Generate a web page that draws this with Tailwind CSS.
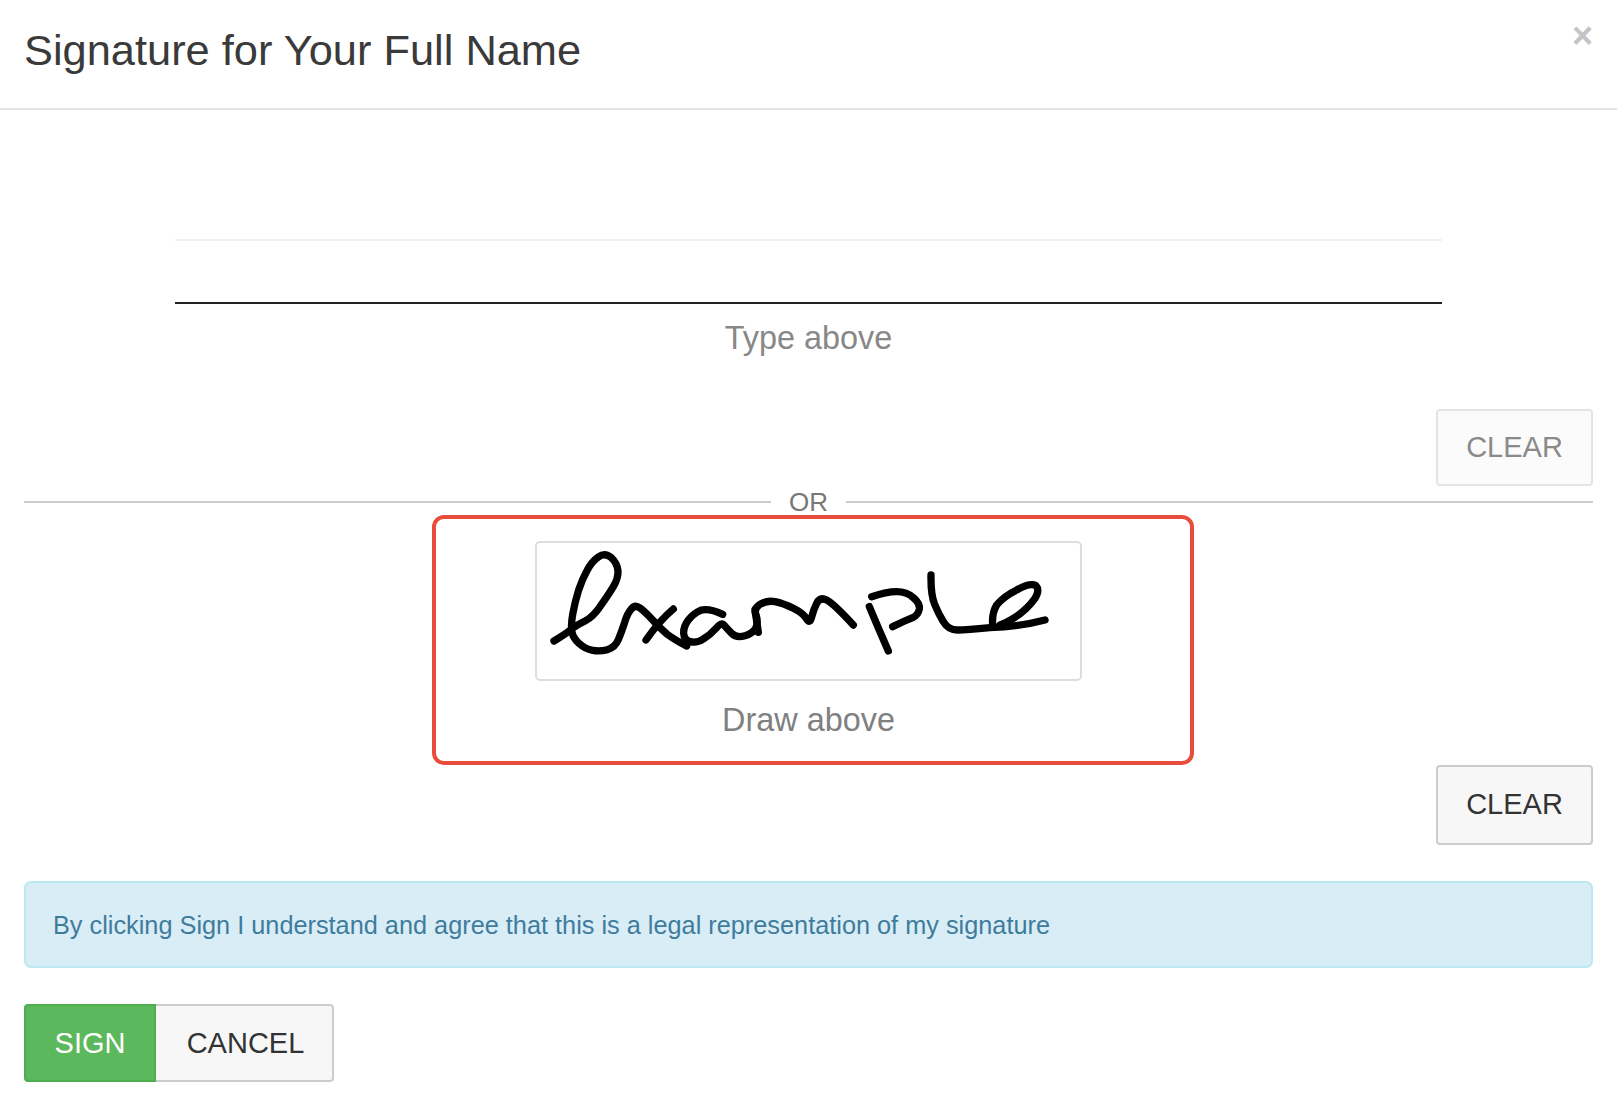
<!DOCTYPE html>
<html lang="en">
<head>
<meta charset="utf-8">
<title>Signature</title>
<script src="https://cdn.jsdelivr.net/npm/@tailwindcss/browser@4"></script>
</head>
<body class="bg-white font-['Liberation_Sans',Arial,sans-serif] text-[#333]">
<div class="w-[1617px] h-[1101px] overflow-hidden flex flex-col">
  <header class="h-[110px] shrink-0 border-b-2 border-[#e5e5e5] pl-6 pr-6 flex items-start justify-between">
    <h1 class="text-[43.4px] leading-none mt-[29px] text-[#3a3a3a]">Signature for Your Full Name</h1>
    <span class="text-[#c4c4c4] text-[36px] font-bold leading-none mt-[18px]">×</span>
  </header>
  <main class="flex-1 flex flex-col px-6">
    <section>
      <div class="mx-[151px] mt-[129px] h-[65px] border-t-2 border-[#f0f0f0] border-b-2 border-b-[#222]"></div>
      <p class="text-center text-[#888] text-[32.4px] leading-none mt-[18px]">Type above</p>
      <div class="flex justify-end mt-[55px]">
        <button class="w-[157px] h-[77px] bg-[#fbfbfb] border-2 border-[#e4e4e4] rounded-[4px] text-[29px] text-[#8a8a8a]">CLEAR</button>
      </div>
    </section>
    <div class="flex items-center gap-[18px] h-[32px]">
      <span class="flex-1 h-[2px] bg-[#ccc]"></span>
      <span class="text-[26px] leading-none text-[#777]">OR</span>
      <span class="flex-1 h-[2px] bg-[#ccc]"></span>
    </div>
    <section class="self-start ml-[408px] w-[762px] h-[250px] mt-[-3px] border-[4px] border-[#e74c3c] rounded-[12px] flex flex-col items-center">
      <div class="w-[547px] h-[140px] mt-[22px] ml-[-9px] border-2 border-[#dddddd] rounded-[5px] shrink-0">
        <svg class="w-full h-full" viewBox="-9 -6 1629 408" fill="none" stroke="#000" stroke-width="22" stroke-linecap="round" stroke-linejoin="round">
          <path d="M42 288 Q80 265 95 252 Q110 240 135 228 Q160 215 182 182 Q205 150 220 125 Q235 100 234 78 Q232 55 214 38 Q195 22 175 36 Q155 50 142 75 Q128 100 116 135 Q105 170 98 208 Q92 245 96 262 Q100 280 118 296 Q135 312 158 316 Q180 320 202 314 Q225 308 235 284 Q245 260 254 232 Q262 205 274 192 Q285 178 300 189 Q315 200 338 225 Q360 250 382 268 Q405 285 440 303"/>
          <path d="M400 192 Q360 225 318 285"/>
          <path d="M548 208 Q505 188 482 196 Q460 205 445 225 Q430 245 431 265 Q432 285 451 290 Q470 295 490 282 Q510 270 528 250 Q545 230 552 240 Q560 250 575 265 Q590 280 615 272 Q640 265 648 248 Q655 230 648 210 Q640 190 660 178 Q680 165 705 170 Q730 175 760 190 Q790 205 800 222 Q810 238 815 216 Q820 195 830 175 Q840 155 860 165 Q880 175 940 240"/>
          <path d="M645 195 L655 262"/>
          <path d="M988 185 Q1015 250 1045 318"/>
          <path d="M995 155 Q1040 140 1070 140 Q1100 140 1120 158 Q1140 175 1138 192 Q1135 210 1118 218 Q1100 225 1058 245"/>
          <path d="M1173 90 Q1172 150 1184 178 Q1195 205 1210 230 Q1225 255 1252 255 Q1280 255 1350 248 Q1440 245 1515 225"/>
          <path d="M1358 240 Q1355 205 1370 180 Q1390 155 1430 135 Q1470 112 1488 122 Q1500 135 1485 160 Q1460 195 1420 220 Q1395 235 1380 240"/>
        </svg>
      </div>
      <p class="text-center text-[#808080] text-[32.4px] leading-none mt-[23px] ml-[-9px]">Draw above</p>
    </section>
    <div class="flex justify-end">
      <button class="w-[157px] h-[80px] pb-[2px] bg-[#f7f7f7] border-2 border-[#ccc] rounded-[4px] text-[29px] text-[#333]">CLEAR</button>
    </div>
    <div class="h-[87px] mt-[36px] bg-[#d9edf7] border-2 border-[#bce8f1] rounded-[7px] pl-[27px] pt-[2px] flex items-center text-[25.3px] text-[#3f7c9c]">By clicking Sign I understand and agree that this is a legal representation of my signature</div>
    <div class="flex mt-[36px]">
      <button class="w-[132px] h-[78px] bg-[#5cb85c] border-2 border-[#4cae4c] rounded-l-[4px] text-[29px] text-white">SIGN</button>
      <button class="w-[178px] h-[78px] pl-[3px] bg-[#f7f7f7] border-2 border-l-0 border-[#ccc] rounded-r-[4px] text-[29px] text-[#333]">CANCEL</button>
    </div>
  </main>
</div>
</body>
</html>
